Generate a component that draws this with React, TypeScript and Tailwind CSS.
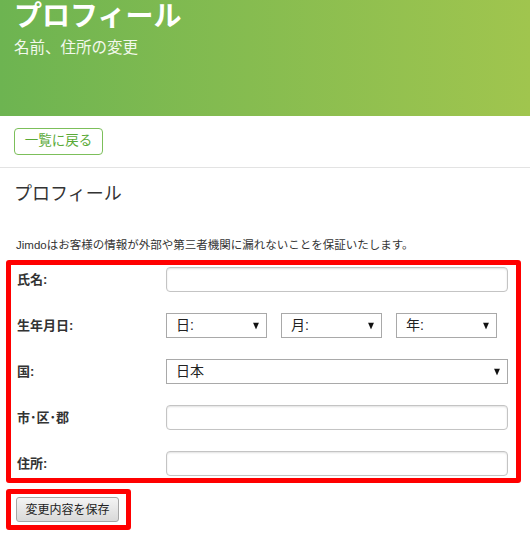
const jp = "font-['Liberation_Sans','Noto_Sans_CJK_JP',sans-serif]";

function Arrow() {
  return (
    <svg className="pointer-events-none absolute right-[8px] top-1/2 -translate-y-1/2" width="6" height="7" viewBox="0 0 6 7">
      <path d="M0 0 H6 L3 7 Z" fill="#111" />
    </svg>
  );
}

function Select({ value, className }: { value: string; className: string }) {
  return (
    <div className={`relative h-[25px] ${className}`}>
      <select
        defaultValue={value}
        className={`h-full w-full appearance-none rounded-none border border-[#a9a9a9] bg-white pl-[9px] text-[14px] leading-[23px] text-[#222] outline-none ${jp}`}
      >
        <option>{value}</option>
      </select>
      <Arrow />
    </div>
  );
}

function TextInput() {
  return (
    <input
      type="text"
      className="h-[25px] w-[342px] rounded-[4px] border border-[#c4c4c4] bg-white shadow-[inset_0_1px_2px_rgba(0,0,0,0.12)] outline-none"
    />
  );
}

function Row({ label, children }: { label: string; children: React.ReactNode }) {
  return (
    <div className="flex h-[25px] items-center">
      <div className="w-[149px] text-[13px] font-bold text-[#333]">{label}</div>
      {children}
    </div>
  );
}

export default function App() {
  return (
    <div className={`w-[530px] bg-white ${jp}`}>
      {/* header */}
      <div className="h-[116px] bg-gradient-to-r from-[#6db451] to-[#a0c54e] pl-[14px]">
        <h1 className="text-[28px] font-bold leading-[34px] text-white">プロフィール</h1>
        <p className="mt-[3px] text-[15.5px] leading-[22px] text-[#f2f8ec]">名前、住所の変更</p>
      </div>

      <div className="border-b border-[#e3e3e3] px-[14px] py-[12px]">
        <button className="h-[27px] w-[89px] rounded-[4px] border border-[#7cbf5a] bg-white text-[13.5px] text-[#5aaa37]">
          一覧に戻る
        </button>
      </div>

      <h2 className="mt-[13px] pl-[14px] text-[18px] leading-[26px] text-[#333]">プロフィール</h2>

      <p className="mt-[30px] pl-[16px] text-[11.5px] leading-[16px] text-[#333]">
        Jimdoはお客様の情報が外部や第三者機関に漏れないことを保証いたします。
      </p>

      <form className="pl-[6px]">
        <div className="mt-[7px] flex w-[515px] flex-col gap-[21px] rounded-[3px] border-[5px] border-[#ff0000] pb-[2px] pl-[6px] pt-[2px]">
          <Row label="氏名:">
            <TextInput />
          </Row>
          <Row label="生年月日:">
            <div className="flex gap-[14px]">
              <Select value="日:" className="w-[101px]" />
              <Select value="月:" className="w-[101px]" />
              <Select value="年:" className="w-[101px]" />
            </div>
          </Row>
          <Row label="国:">
            <Select value="日本" className="w-[342px]" />
          </Row>
          <Row label="市･区･郡">
            <TextInput />
          </Row>
          <Row label="住所:">
            <TextInput />
          </Row>
        </div>

        <div className="mt-[6px] w-[125px] rounded-[3px] border-[5px] border-[#ff0000] pb-[3px] pl-[5px] pt-[3px]">
          <button
            type="button"
            className="block h-[25px] w-[103px] rounded-[3px] border border-[#a6a6a6] bg-gradient-to-b from-[#f4f4f4] to-[#d9d9d9] text-[12px] text-[#222]"
          >
            変更内容を保存
          </button>
        </div>
      </form>
    </div>
  );
}
